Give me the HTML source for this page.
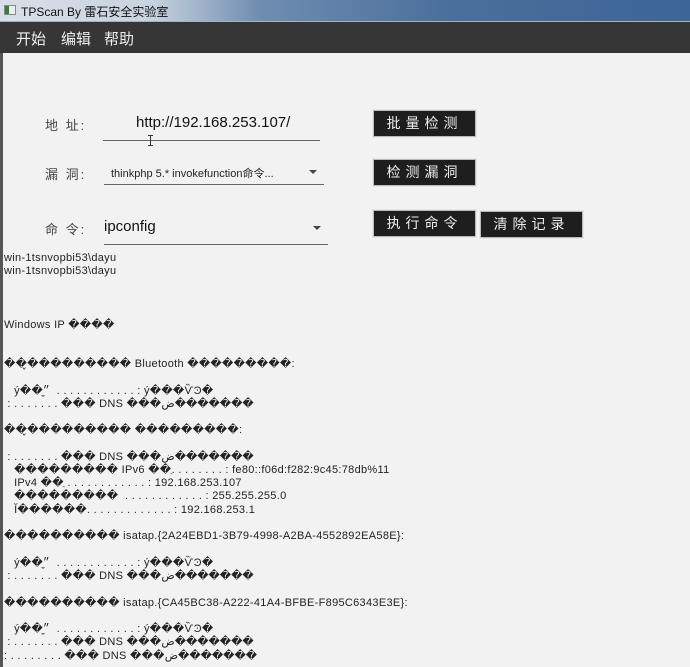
<!DOCTYPE html>
<html><head><meta charset="utf-8">
<style>
*{margin:0;padding:0;box-sizing:border-box}
html,body{width:690px;height:667px;overflow:hidden;background:#f2f2f2;font-family:"Liberation Sans","Noto Sans CJK SC",sans-serif}
.t{position:absolute;white-space:pre}
#title{position:absolute;left:0;top:0;width:690px;height:21px;background:linear-gradient(90deg,#d8dfe8 0px,#c8d3df 150px,#6f8db0 260px,#4a6f9c 450px,#3d6597 690px)}
#menu{position:absolute;left:0;top:21px;width:690px;height:32px;background:#363636;border-top:1px solid #9fb3c8}
#ledge{position:absolute;left:0;top:53px;width:3px;height:614px;background:#555}
.lab{font-size:13px;color:#444;letter-spacing:2px}
.line{position:absolute;height:1px;background:#666}
.btn{position:absolute;width:103px;height:27px;background:#1e1e1e;border:1px solid #bbb;outline:1px solid #e8e8e8;color:#eee;font-size:14px;letter-spacing:5px;text-align:center;line-height:25px}
.out{font-size:11px;color:#222;letter-spacing:0.3px}
.arrow{position:absolute;width:0;height:0;border-left:4px solid transparent;border-right:4px solid transparent;border-top:4px solid #444}
</style></head><body>
<div id="title"></div>
<div style="position:absolute;left:4px;top:5px;width:12px;height:10px;background:#eee;border:1px solid #888"><div style="width:4px;height:8px;background:#3a7a3a"></div></div>
<div class="t" style="left:21px;top:3px;font-size:12px;color:#111">TPScan By 雷石安全实验室</div>
<div id="menu"></div>
<div class="t" style="left:16px;top:28px;font-size:15px;color:#eee">开始</div>
<div class="t" style="left:61px;top:28px;font-size:15px;color:#eee">编辑</div>
<div class="t" style="left:104px;top:28px;font-size:15px;color:#eee">帮助</div>
<div id="ledge"></div>

<div class="t lab" style="left:45px;top:115px">地 址:</div>
<div class="t" style="left:136px;top:114px;font-size:15px;color:#111">http://192.168.253.107/</div>
<div class="line" style="left:103px;top:140px;width:217px"></div>
<div style="position:absolute;left:150px;top:135px;width:1px;height:11px;background:#333"></div>
<div style="position:absolute;left:148px;top:135px;width:5px;height:1px;background:#333"></div>
<div style="position:absolute;left:148px;top:145px;width:5px;height:1px;background:#333"></div>

<div class="t lab" style="left:45px;top:164px">漏 洞:</div>
<div class="t" style="left:111px;top:165px;font-size:11px;color:#222">thinkphp 5.* invokefunction命令...</div>
<div class="arrow" style="left:309px;top:170px"></div>
<div class="line" style="left:104px;top:184px;width:220px"></div>

<div class="t lab" style="left:45px;top:219px">命 令:</div>
<div class="t" style="left:104px;top:218px;font-size:15px;color:#111">ipconfig</div>
<div class="arrow" style="left:313px;top:226px"></div>
<div class="line" style="left:104px;top:244px;width:224px"></div>

<div class="btn" style="left:373px;top:110px">批量检测</div>
<div class="btn" style="left:373px;top:159px">检测漏洞</div>
<div class="btn" style="left:373px;top:210px">执行命令</div>
<div class="btn" style="left:480px;top:211px">清除记录</div>

<div class="t out" style="left:4px;top:252px">win-1tsnvopbi53\dayu</div>
<div class="t out" style="left:4px;top:265px">win-1tsnvopbi53\dayu</div>
<div class="t out" style="left:4px;top:318px">Windows IP ����</div>
<div class="t out" style="left:4px;top:357px">��̬��������� Bluetooth ���������:</div>
<div class="t out" style="left:4px;top:384px">   ý��״̬  . . . . . . . . . . . . : ý���ѶϿ�</div>
<div class="t out" style="left:4px;top:397px"> : . . . . . . . ��� DNS ���ض�������</div>
<div class="t out" style="left:4px;top:423px">��̬��������� ���������:</div>
<div class="t out" style="left:4px;top:450px"> : . . . . . . . ��� DNS ���ض�������</div>
<div class="t out" style="left:4px;top:463px">   ��������� IPv6 ��ַ. . . . . . . . : fe80::f06d:f282:9c45:78db%11</div>
<div class="t out" style="left:4px;top:476px">   IPv4 ��ַ . . . . . . . . . . . . : 192.168.253.107</div>
<div class="t out" style="left:4px;top:489px">   ���������  . . . . . . . . . . . . : 255.255.255.0</div>
<div class="t out" style="left:4px;top:503px">   Ĭ������. . . . . . . . . . . . . : 192.168.253.1</div>
<div class="t out" style="left:4px;top:529px">���������� isatap.{2A24EBD1-3B79-4998-A2BA-4552892EA58E}:</div>
<div class="t out" style="left:4px;top:556px">   ý��״̬  . . . . . . . . . . . . : ý���ѶϿ�</div>
<div class="t out" style="left:4px;top:569px"> : . . . . . . . ��� DNS ���ض�������</div>
<div class="t out" style="left:4px;top:596px">���������� isatap.{CA45BC38-A222-41A4-BFBE-F895C6343E3E}:</div>
<div class="t out" style="left:4px;top:622px">   ý��״̬  . . . . . . . . . . . . : ý���ѶϿ�</div>
<div class="t out" style="left:4px;top:635px"> : . . . . . . . ��� DNS ���ض�������</div>
<div class="t out" style="left:4px;top:649px">: . . . . . . . . ��� DNS ���ض�������</div>
</body></html>
